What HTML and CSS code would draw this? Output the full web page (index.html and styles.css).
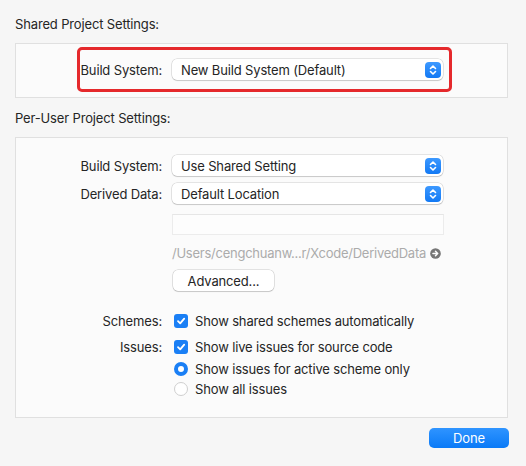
FILE: index.html
```html
<!DOCTYPE html>
<html lang="en">
<head>
    <meta charset="UTF-8">
    <title>Project Settings</title>
    <link rel="stylesheet" href="styles.css">
</head>
<body>
    <div class="sheet">
        <div class="section-title">Shared Project Settings:</div>
        <div class="box box-shared">
            <div class="highlight">
                <span class="label">Build System:</span>
                <div class="popup">
                    <span>New Build System (Default)</span>
                    <span class="popup-arrow">
                        <svg width="10" height="12" viewBox="0 0 10 12"><path d="M2.5 4.5 L5 2 L7.5 4.5 M2.5 7.5 L5 10 L7.5 7.5" fill="none" stroke="#fff" stroke-width="1.6" stroke-linecap="round" stroke-linejoin="round"/></svg>
                    </span>
                </div>
            </div>
        </div>

        <div class="section-title second">Per-User Project Settings:</div>
        <div class="box box-user">
            <div class="grid">
                <span class="label">Build System:</span>
                <div class="popup">
                    <span>Use Shared Setting</span>
                    <span class="popup-arrow">
                        <svg width="10" height="12" viewBox="0 0 10 12"><path d="M2.5 4.5 L5 2 L7.5 4.5 M2.5 7.5 L5 10 L7.5 7.5" fill="none" stroke="#fff" stroke-width="1.6" stroke-linecap="round" stroke-linejoin="round"/></svg>
                    </span>
                </div>

                <span class="label">Derived Data:</span>
                <div class="popup">
                    <span>Default Location</span>
                    <span class="popup-arrow">
                        <svg width="10" height="12" viewBox="0 0 10 12"><path d="M2.5 4.5 L5 2 L7.5 4.5 M2.5 7.5 L5 10 L7.5 7.5" fill="none" stroke="#fff" stroke-width="1.6" stroke-linecap="round" stroke-linejoin="round"/></svg>
                    </span>
                </div>

                <span></span>
                <div class="field"></div>

                <span></span>
                <div class="path">
                    <span>/Users/cengchuanw...r/Xcode/DerivedData</span>
                    <svg class="reveal" width="11" height="11" viewBox="0 0 12 12"><circle cx="6" cy="6" r="5.8" fill="#777"/><path d="M3.2 6 H8.4 M6 3.6 L8.4 6 L6 8.4" fill="none" stroke="#fff" stroke-width="1.6" stroke-linecap="round" stroke-linejoin="round"/></svg>
                </div>

                <span></span>
                <div><button class="btn">Advanced...</button></div>

                <span class="label schemes">Schemes:</span>
                <label class="option schemes">
                    <span class="check"><svg width="10" height="10" viewBox="0 0 10 10"><path d="M2 5.2 L4.2 7.4 L8.2 2.6" fill="none" stroke="#fff" stroke-width="1.8" stroke-linecap="round" stroke-linejoin="round"/></svg></span>
                    Show shared schemes automatically
                </label>

                <span class="label issues">Issues:</span>
                <div class="options issues">
                    <label class="option">
                        <span class="check"><svg width="10" height="10" viewBox="0 0 10 10"><path d="M2 5.2 L4.2 7.4 L8.2 2.6" fill="none" stroke="#fff" stroke-width="1.8" stroke-linecap="round" stroke-linejoin="round"/></svg></span>
                        Show live issues for source code
                    </label>
                    <label class="option first-radio">
                        <span class="radio on"></span>
                        Show issues for active scheme only
                    </label>
                    <label class="option">
                        <span class="radio"></span>
                        Show all issues
                    </label>
                </div>
            </div>
        </div>

        <div class="footer">
            <button class="btn-primary">Done</button>
        </div>
    </div>
</body>
</html>
```

FILE: styles.css
```css
body {
    margin: 0;
    background: #f6f6f6;
    font-family: Inter, "Noto Sans", sans-serif;
    font-size: 13px;
    letter-spacing: -0.15px;
    color: #252525;
}
.sheet {
    padding: 16px 18px 0 15px;
}
.section-title {
    line-height: 16px;
}
.section-title.second {
    margin-top: 12px;
}
.box {
    margin-top: 11px;
    background: #fbfbfb;
    border: 1px solid #e0e0e0;
}
.box-shared {
    height: 53px;
    position: relative;
}
.highlight {
    position: absolute;
    left: 61px;
    top: 3px;
    width: 369px;
    height: 39px;
    border: 3px solid #e5292c;
    border-radius: 5px;
    display: grid;
    grid-template-columns: 82px 271px;
    column-gap: 10px;
    align-items: center;
}
.label {
    text-align: right;
    white-space: nowrap;
}
.popup {
    box-sizing: border-box;
    width: 271px;
    height: 21px;
    background: #fff;
    border-radius: 5px;
    box-shadow: 0 0 0 0.5px rgba(0, 0, 0, 0.18), 0 1px 1px rgba(0, 0, 0, 0.12);
    display: flex;
    align-items: center;
    justify-content: space-between;
    padding: 0 2px 0 9px;
}
.popup-arrow {
    width: 16px;
    height: 16px;
    border-radius: 4px;
    background: linear-gradient(#3d99ff, #1279f4);
    display: flex;
    align-items: center;
    justify-content: center;
}
.box-user {
    height: 281px;
    box-sizing: border-box;
    padding-top: 17px;
}
.grid {
    display: grid;
    grid-template-columns: 146px 272px;
    column-gap: 10px;
    row-gap: 7px;
    align-items: center;
}
.field {
    height: 21px;
    box-sizing: border-box;
    margin-top: 3px;
    background: #fdfdfd;
    border: 1px solid #ececec;
    border-top-color: #e6e6e6;
}
.path {
    letter-spacing: -0.25px;
    color: #ababab;
    display: flex;
    align-items: center;
    gap: 4px;
    height: 20px;
    margin-top: 1px;
    white-space: nowrap;
}
.reveal {
    flex-shrink: 0;
    margin-top: 1px;
}
.btn {
    font: inherit;
    letter-spacing: inherit;
    color: #252525;
    width: 101px;
    height: 21px;
    margin-left: 1px;
    background: #fff;
    border: none;
    border-radius: 5px;
    box-shadow: 0 0 0 0.5px rgba(0, 0, 0, 0.2), 0 1px 1px rgba(0, 0, 0, 0.12);
    padding: 0;
}
.schemes {
    margin-top: 15px;
}
.issues {
    margin-top: 3px;
    align-self: start;
}
.label.issues {
    line-height: 16px;
}
.options {
    display: flex;
    flex-direction: column;
    gap: 4px;
}
.option {
    display: flex;
    align-items: center;
    gap: 7px;
    line-height: 16px;
    margin-left: 2px;
}
.first-radio {
    margin-top: 2px;
}
.check {
    flex-shrink: 0;
    width: 14px;
    height: 14px;
    border-radius: 3px;
    background: #1a7ff5;
    display: flex;
    align-items: center;
    justify-content: center;
}
.radio {
    flex-shrink: 0;
    box-sizing: border-box;
    width: 14px;
    height: 14px;
    border-radius: 50%;
    background: #fff;
    border: 1px solid #cfcfcf;
}
.radio.on {
    border: 4.5px solid #1a7ff5;
}
.footer {
    display: flex;
    justify-content: flex-end;
    margin-top: 10px;
}
.btn-primary {
    font: inherit;
    letter-spacing: inherit;
    color: #fff;
    width: 80px;
    height: 20px;
    border: none;
    border-radius: 5px;
    background: linear-gradient(#2f94ff, #0a7af7);
    padding: 0;
    margin-right: -1px;
}
```
